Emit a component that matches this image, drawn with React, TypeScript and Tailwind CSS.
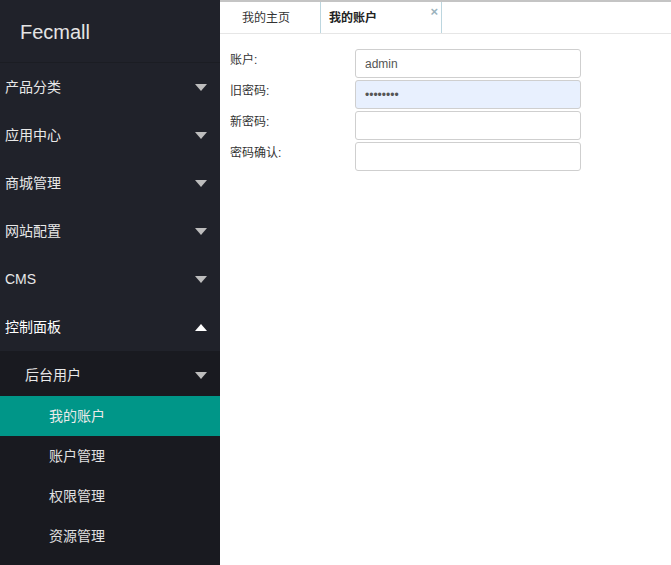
import { useState } from 'react';

// ─── Sidebar menu data ───
const topMenus = ['产品分类', '应用中心', '商城管理', '网站配置', 'CMS'];
const subItems = ['我的账户', '账户管理', '权限管理', '资源管理'];

const font = { fontFamily: '"Liberation Sans", "Noto Sans CJK SC", sans-serif' };

function Caret({ up = false }: { up?: boolean }) {
  return (
    <svg width="12" height="7" viewBox="0 0 12 7" className={up ? 'fill-white' : 'fill-[#bdbdbd]'}>
      {up ? <polygon points="0,7 12,7 6,0" /> : <polygon points="0,0 12,0 6,7" />}
    </svg>
  );
}

function Field({ label, value, type = 'text', autofill = false }: { label: string; value: string; type?: string; autofill?: boolean }) {
  return (
    <div className="flex items-start h-[31px]">
      <label className="w-[135px] pl-[10px] pt-[3px] text-[12px] leading-[16px] text-[#333]">{label}</label>
      <input
        type={type}
        defaultValue={value}
        className={`h-[29px] w-[226px] rounded-[3px] border border-[#cfcfcf] px-[9px] text-[12px] text-[#555] outline-none ${
          autofill ? 'bg-[#e8f0fe] text-[#111]' : 'bg-white'
        }`}
        style={font}
      />
    </div>
  );
}

export default function App() {
  const [active] = useState('我的账户');

  return (
    <div className="flex h-[565px] w-[671px] overflow-hidden bg-white" style={font}>
      {/* Sidebar */}
      <aside className="flex w-[220px] shrink-0 flex-col bg-[#20222a]">
        <div className="flex h-[63px] items-center border-b border-[#1b1d23] pl-[20px] pt-[2px] text-[20px] text-[#e4e4e4]">
          Fecmall
        </div>
        {topMenus.map((m) => (
          <div key={m} className="flex h-[48px] items-center justify-between pl-[5px] pr-[13px] text-[14px] text-[#e8e8e8]">
            <span>{m}</span>
            <Caret />
          </div>
        ))}
        <div className="flex h-[48px] items-center justify-between pl-[5px] pr-[13px] text-[14px] text-white">
          <span>控制面板</span>
          <Caret up />
        </div>
        <div className="flex flex-1 flex-col bg-[#191a20]">
          <div className="flex h-[45px] items-center justify-between pl-[25px] pr-[13px] pt-[4px] text-[14px] text-[#e8e8e8]">
            <span>后台用户</span>
            <Caret />
          </div>
          {subItems.map((s) => (
            <div
              key={s}
              className={`flex h-[40px] items-center pl-[49px] text-[14px] ${
                s === active ? 'bg-[#009688] text-[#eaeaea]' : 'text-[#e0e0e0]'
              }`}
            >
              {s}
            </div>
          ))}
        </div>
      </aside>

      {/* Main */}
      <main className="flex flex-1 flex-col">
        <div className="flex h-[34px] border-t-2 border-b border-t-[#c4c4c4] border-b-[#e6e6e6]">
          <div className="flex w-[101px] items-center pl-[22px] border-r border-[#bcd6df] text-[12px] text-[#333]">
            我的主页
          </div>
          <div className="relative flex w-[121px] items-center border-r border-[#bcd6df] pl-[8px] text-[12px] font-bold text-[#222]">
            我的账户
            <span className="absolute right-[3px] top-[2px] text-[13px] font-bold leading-[16px] text-[#9bb3bd]">×</span>
          </div>
        </div>
        <div className="flex flex-col pt-[15px]">
          <Field label="账户:" value="admin" />
          <Field label="旧密码:" value="12345678" type="password" autofill />
          <Field label="新密码:" value="" type="password" />
          <Field label="密码确认:" value="" type="password" />
        </div>
      </main>
    </div>
  );
}
